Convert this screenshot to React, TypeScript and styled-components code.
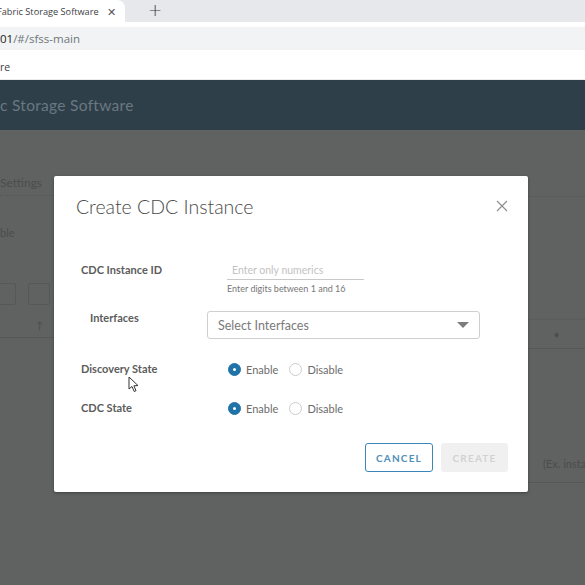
import styled, { createGlobalStyle } from 'styled-components';

const GlobalStyle = createGlobalStyle`
  html, body {
    margin: 0;
    padding: 0;
    width: 585px;
    height: 585px;
    overflow: hidden;
    background: #ffffff;
  }
  body {
    font-family: Lato, "Open Sans", sans-serif;
  }
  * { box-sizing: border-box; }
`;

const Screen = styled.div`
  width: 585px;
  height: 585px;
  display: flex;
  flex-direction: column;
  overflow: hidden;
`;

/* ---------- browser chrome ---------- */

const TabStrip = styled.div`
  height: 22px;
  background: #e6e8eb;
  display: flex;
  align-items: stretch;
`;

const ActiveTab = styled.div`
  width: 128px;
  margin-left: -3px;
  background: #ffffff;
  border-top-right-radius: 8px;
  display: flex;
  align-items: center;
  justify-content: space-between;
  padding: 0 9px 0 0;
  font-family: "Open Sans", "Noto Sans", sans-serif;
  font-size: 9.2px;
  color: #3c4043;
  white-space: nowrap;
`;

const TabClose = styled.span`
  font-size: 11px;
  color: #555;
`;

const NewTab = styled.span`
  margin-left: 23px;
  font-size: 17px;
  line-height: 20px;
  color: #3c4043;
  font-family: "DejaVu Sans", sans-serif;
  font-weight: 300;
`;

const Toolbar = styled.div`
  height: 32px;
  background: #ffffff;
  padding-top: 5px;
`;

const Omnibox = styled.div`
  height: 23px;
  background: #f1f3f4;
  display: flex;
  align-items: center;
  font-family: "Open Sans", "Noto Sans", sans-serif;
  font-size: 11.5px;
  color: #70757a;
`;

const Host = styled.span`
  color: #202124;
`;

const Bookmarks = styled.div`
  height: 26px;
  background: #ffffff;
  border-bottom: 1px solid #ececec;
  display: flex;
  align-items: center;
  font-family: "Open Sans", "Noto Sans", sans-serif;
  font-size: 10.5px;
  color: #3c4043;
`;

/* ---------- dimmed app ---------- */

const AppArea = styled.div`
  position: relative;
  flex: 1;
  background: #606161;
  display: flex;
  flex-direction: column;
`;

const AppHeader = styled.div`
  height: 50px;
  background: #2f3f49;
  display: flex;
  align-items: center;
  font-size: 15.5px;
  color: #6a7881;
  letter-spacing: 0.3px;
`;

const PageBody = styled.div`
  position: relative;
  flex: 1;
  display: flex;
  justify-content: space-between;
`;

const SideColumn = styled.div<{ $width: number }>`
  width: ${p => p.$width}px;
  display: flex;
  flex-direction: column;
  color: #4c4d4d;
  font-size: 11px;
  white-space: nowrap;
`;

const GhostTab = styled.div`
  margin-top: 46px;
  height: 20px;
  line-height: 14px;
  border-bottom: 1px dotted #555;
  font-size: 12px;
`;

const GhostText = styled.div<{ $top: number; $indent?: number }>`
  margin-top: ${p => p.$top}px;
  margin-left: ${p => p.$indent || 0}px;
  font-size: 11px;
`;

const GhostButtons = styled.div`
  margin-top: 44px;
  display: flex;
  gap: 12px;
  margin-left: -6px;
`;

const GhostButton = styled.div`
  width: 22px;
  height: 22px;
  border: 1px solid #575757;
  border-radius: 2px;
`;

const GhostRule = styled.div<{ $top: number; $dotted?: boolean }>`
  margin-top: ${p => p.$top}px;
  border-top: 1px ${p => (p.$dotted ? 'dotted' : 'solid')} #575757;
`;

const GhostGlyph = styled.div<{ $top: number; $indent: number }>`
  margin-top: ${p => p.$top}px;
  margin-left: ${p => p.$indent}px;
  font-size: 10px;
  line-height: 12px;
`;

/* ---------- modal ---------- */

const Modal = styled.div`
  position: absolute;
  top: 96px;
  left: 54px;
  width: 474px;
  height: 316px;
  background: #ffffff;
  border-radius: 2px;
  box-shadow: 0 1px 3px rgba(0, 0, 0, 0.35);
  padding: 17px 20px 20px 22px;
  display: flex;
  flex-direction: column;
`;

const ModalHeader = styled.div`
  display: flex;
  justify-content: space-between;
  align-items: center;
  height: 26px;
`;

const Title = styled.h3`
  margin: 0;
  font-family: Lato, sans-serif;
  font-weight: 300;
  font-size: 19.5px;
  color: #4a4a4a;
`;

const CloseButton = styled.button`
  border: 0;
  background: none;
  padding: 0;
  width: 12px;
  height: 12px;
  display: flex;
`;

const Form = styled.div`
  margin-top: 41px;
  padding-left: 5px;
  display: flex;
  flex-direction: column;
`;

const Row = styled.div<{ $top?: number; $align?: string }>`
  display: flex;
  align-items: ${p => p.$align || 'center'};
  margin-top: ${p => p.$top || 0}px;
`;

const Label = styled.label<{ $width?: number; $indent?: number }>`
  width: ${p => p.$width || 146}px;
  padding-left: ${p => p.$indent || 0}px;
  font-size: 11px;
  line-height: 14px;
  font-weight: 700;
  color: #5c5c5c;
`;

const TextInput = styled.input`
  width: 137px;
  height: 20px;
  border: 0;
  border-bottom: 1px solid #c9c9c9;
  padding: 0 5px;
  font-family: Lato, sans-serif;
  font-size: 10.5px;
  outline: none;
  &::placeholder {
    color: #c2c2c2;
  }
`;

const Helper = styled.span`
  margin-top: 3px;
  font-size: 9px;
  line-height: 12px;
  color: #777777;
`;

const Select = styled.div`
  width: 273px;
  height: 28px;
  border: 1px solid #cfcfcf;
  border-radius: 3px;
  display: flex;
  align-items: center;
  justify-content: space-between;
  padding: 0 10px;
  font-size: 12.5px;
  color: #7a7a7a;
`;

const Caret = styled.span`
  width: 0;
  height: 0;
  border-left: 6px solid transparent;
  border-right: 6px solid transparent;
  border-top: 6px solid #7d7d7d;
`;

const RadioGroup = styled.div`
  display: flex;
  align-items: center;
  gap: 11px;
  padding-left: 1px;
`;

const RadioOption = styled.label`
  display: flex;
  align-items: center;
  gap: 5px;
  font-size: 11px;
  color: #6c6c6c;
`;

const RadioDot = styled.span<{ $checked?: boolean }>`
  width: 13px;
  height: 13px;
  border-radius: 50%;
  background: ${p => (p.$checked ? '#1f73a8' : '#ffffff')};
  border: 1px solid ${p => (p.$checked ? '#1f73a8' : '#cccccc')};
  display: flex;
  align-items: center;
  justify-content: center;
  &::after {
    content: '';
    width: 3px;
    height: 3px;
    border-radius: 50%;
    background: ${p => (p.$checked ? '#ffffff' : 'transparent')};
  }
`;

const Footer = styled.div`
  margin-top: auto;
  display: flex;
  justify-content: flex-end;
  gap: 8px;
`;

const Button = styled.button<{ $primary?: boolean }>`
  height: 29px;
  padding: 0 10px;
  min-width: 67px;
  border-radius: 3px;
  font-family: Lato, sans-serif;
  font-size: 10px;
  font-weight: 700;
  letter-spacing: 1.2px;
  border: 1px solid ${p => (p.$primary ? '#f0f0f0' : '#3a86b8')};
  background: ${p => (p.$primary ? '#f0f0f0' : '#ffffff')};
  color: ${p => (p.$primary ? '#d2d2d2' : '#4f8fb8')};
`;

const Cursor = styled.svg`
  position: absolute;
  left: 128px;
  top: 296px;
`;

function RadioPair({ name }: { name: string }) {
  return (
    <RadioGroup role="radiogroup" aria-label={name}>
      <RadioOption>
        <RadioDot $checked />
        Enable
      </RadioOption>
      <RadioOption>
        <RadioDot />
        Disable
      </RadioOption>
    </RadioGroup>
  );
}

export default function App() {
  return (
    <Screen>
      <GlobalStyle />
      <TabStrip>
        <ActiveTab>
          <span>Fabric Storage Software</span>
          <TabClose>✕</TabClose>
        </ActiveTab>
        <NewTab>+</NewTab>
      </TabStrip>
      <Toolbar>
        <Omnibox>
          <Host>01</Host>/#/sfss-main
        </Omnibox>
      </Toolbar>
      <Bookmarks>re</Bookmarks>

      <AppArea>
        <AppHeader>c Storage Software</AppHeader>
        <PageBody>
          <SideColumn $width={54}>
            <GhostTab>Settings</GhostTab>
            <GhostText $top={30}>ble</GhostText>
            <GhostButtons>
              <GhostButton />
              <GhostButton />
            </GhostButtons>
            <GhostGlyph $top={14} $indent={36}>↑</GhostGlyph>
            <GhostRule $top={6} />
          </SideColumn>
          <SideColumn $width={57}>
            <GhostRule $top={66} $dotted />
            <GhostRule $top={122} $dotted />
            <GhostGlyph $top={8} $indent={26}>♦</GhostGlyph>
            <GhostRule $top={8} />
            <GhostText $top={108} $indent={15}>(Ex. instal</GhostText>
            <GhostRule $top={12} />
          </SideColumn>
        </PageBody>

        <Modal role="dialog" aria-label="Create CDC Instance">
          <ModalHeader>
            <Title>Create CDC Instance</Title>
            <CloseButton aria-label="Close">
              <svg width="12" height="12" viewBox="0 0 12 12">
                <path d="M1 1 L11 11 M11 1 L1 11" stroke="#8f8f8f" strokeWidth="1.2" fill="none" />
              </svg>
            </CloseButton>
          </ModalHeader>

          <Form>
            <Row>
              <Label>CDC Instance ID</Label>
              <TextInput placeholder="Enter only numerics" />
            </Row>
            <Row>
              <Label />
              <Helper>Enter digits between 1 and 16</Helper>
            </Row>
            <Row $top={16} $align="flex-start">
              <Label $width={126} $indent={9}>Interfaces</Label>
              <Select>
                Select Interfaces
                <Caret />
              </Select>
            </Row>
            <Row $top={23}>
              <Label>Discovery State</Label>
              <RadioPair name="Discovery State" />
            </Row>
            <Row $top={25}>
              <Label>CDC State</Label>
              <RadioPair name="CDC State" />
            </Row>
          </Form>

          <Footer>
            <Button>CANCEL</Button>
            <Button $primary disabled>CREATE</Button>
          </Footer>
        </Modal>

        <Cursor width="12" height="17" viewBox="0 0 12 17">
          <path d="M1 1 L1 13 L4 10.5 L6.2 15.5 L8 14.7 L5.9 9.8 L10 9.6 Z" fill="#ffffff" stroke="#333" strokeWidth="1" strokeLinejoin="round" />
        </Cursor>
      </AppArea>
    </Screen>
  );
}
